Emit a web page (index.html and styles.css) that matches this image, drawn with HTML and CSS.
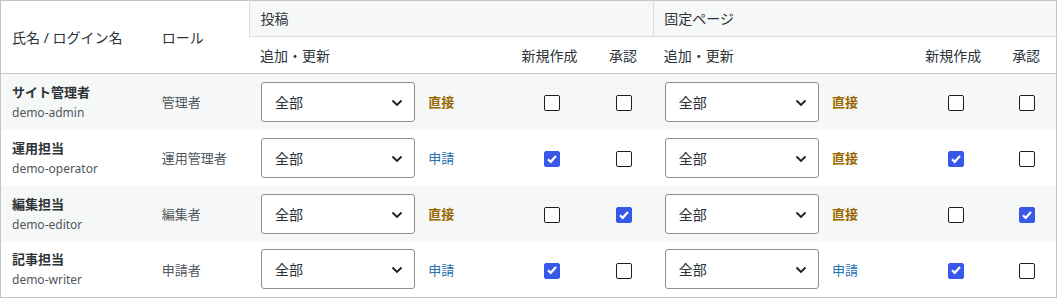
FILE: index.html
```html
<!DOCTYPE html>
<html lang="ja">
<head>
<meta charset="utf-8">
<link rel="stylesheet" href="styles.css">
</head>
<body>
<table class="perm">
  <colgroup>
    <col class="w-name"><col class="w-role">
    <col class="w-sel"><col class="w-mode"><col class="w-new"><col class="w-ok">
    <col class="w-sel"><col class="w-mode"><col class="w-new"><col class="w-ok2">
  </colgroup>
  <thead>
    <tr class="hr1">
      <th rowspan="2" class="h-left">氏名 / ログイン名</th>
      <th rowspan="2" class="h-left h-role">ロール</th>
      <th colspan="4" class="grp">投稿</th>
      <th colspan="4" class="grp">固定ページ</th>
    </tr>
    <tr class="hr2">
      <th class="sub">追加・更新</th>
      <th></th>
      <th class="subc subn">新規作成</th>
      <th class="subc">承認</th>
      <th class="sub">追加・更新</th>
      <th></th>
      <th class="subc subn">新規作成</th>
      <th class="subc">承認</th>
    </tr>
  </thead>
  <tbody>
    <tr class="alt">
      <td class="name"><div class="disp">サイト管理者</div><div class="login">demo-admin</div></td>
      <td class="role">管理者</td>
      <td class="selcell"><div class="sel"><span>全部</span><svg class="chev" width="12" height="8" viewBox="0 0 12 8"><path d="M1.5 1.5 6 6l4.5-4.5" fill="none" stroke="#1e1e1e" stroke-width="1.8"/></svg></div></td>
      <td class="mode"><span class="direct">直接</span></td>
      <td class="cbcell"><span class="cb"></span></td>
      <td class="cbcell"><span class="cb"></span></td>
      <td class="selcell"><div class="sel"><span>全部</span><svg class="chev" width="12" height="8" viewBox="0 0 12 8"><path d="M1.5 1.5 6 6l4.5-4.5" fill="none" stroke="#1e1e1e" stroke-width="1.8"/></svg></div></td>
      <td class="mode"><span class="direct">直接</span></td>
      <td class="cbcell"><span class="cb"></span></td>
      <td class="cbcell"><span class="cb"></span></td>
    </tr>
    <tr>
      <td class="name"><div class="disp">運用担当</div><div class="login">demo-operator</div></td>
      <td class="role">運用管理者</td>
      <td class="selcell"><div class="sel"><span>全部</span><svg class="chev" width="12" height="8" viewBox="0 0 12 8"><path d="M1.5 1.5 6 6l4.5-4.5" fill="none" stroke="#1e1e1e" stroke-width="1.8"/></svg></div></td>
      <td class="mode"><span class="request">申請</span></td>
      <td class="cbcell"><span class="cb on"><svg width="16" height="16" viewBox="0 0 16 16"><path d="M4 8.2 6.7 10.8 12 5" fill="none" stroke="#fff" stroke-width="2.2"/></svg></span></td>
      <td class="cbcell"><span class="cb"></span></td>
      <td class="selcell"><div class="sel"><span>全部</span><svg class="chev" width="12" height="8" viewBox="0 0 12 8"><path d="M1.5 1.5 6 6l4.5-4.5" fill="none" stroke="#1e1e1e" stroke-width="1.8"/></svg></div></td>
      <td class="mode"><span class="direct">直接</span></td>
      <td class="cbcell"><span class="cb on"><svg width="16" height="16" viewBox="0 0 16 16"><path d="M4 8.2 6.7 10.8 12 5" fill="none" stroke="#fff" stroke-width="2.2"/></svg></span></td>
      <td class="cbcell"><span class="cb"></span></td>
    </tr>
    <tr class="alt">
      <td class="name"><div class="disp">編集担当</div><div class="login">demo-editor</div></td>
      <td class="role">編集者</td>
      <td class="selcell"><div class="sel"><span>全部</span><svg class="chev" width="12" height="8" viewBox="0 0 12 8"><path d="M1.5 1.5 6 6l4.5-4.5" fill="none" stroke="#1e1e1e" stroke-width="1.8"/></svg></div></td>
      <td class="mode"><span class="direct">直接</span></td>
      <td class="cbcell"><span class="cb"></span></td>
      <td class="cbcell"><span class="cb on"><svg width="16" height="16" viewBox="0 0 16 16"><path d="M4 8.2 6.7 10.8 12 5" fill="none" stroke="#fff" stroke-width="2.2"/></svg></span></td>
      <td class="selcell"><div class="sel"><span>全部</span><svg class="chev" width="12" height="8" viewBox="0 0 12 8"><path d="M1.5 1.5 6 6l4.5-4.5" fill="none" stroke="#1e1e1e" stroke-width="1.8"/></svg></div></td>
      <td class="mode"><span class="direct">直接</span></td>
      <td class="cbcell"><span class="cb"></span></td>
      <td class="cbcell"><span class="cb on"><svg width="16" height="16" viewBox="0 0 16 16"><path d="M4 8.2 6.7 10.8 12 5" fill="none" stroke="#fff" stroke-width="2.2"/></svg></span></td>
    </tr>
    <tr>
      <td class="name"><div class="disp">記事担当</div><div class="login">demo-writer</div></td>
      <td class="role">申請者</td>
      <td class="selcell"><div class="sel"><span>全部</span><svg class="chev" width="12" height="8" viewBox="0 0 12 8"><path d="M1.5 1.5 6 6l4.5-4.5" fill="none" stroke="#1e1e1e" stroke-width="1.8"/></svg></div></td>
      <td class="mode"><span class="request">申請</span></td>
      <td class="cbcell"><span class="cb on"><svg width="16" height="16" viewBox="0 0 16 16"><path d="M4 8.2 6.7 10.8 12 5" fill="none" stroke="#fff" stroke-width="2.2"/></svg></span></td>
      <td class="cbcell"><span class="cb"></span></td>
      <td class="selcell"><div class="sel"><span>全部</span><svg class="chev" width="12" height="8" viewBox="0 0 12 8"><path d="M1.5 1.5 6 6l4.5-4.5" fill="none" stroke="#1e1e1e" stroke-width="1.8"/></svg></div></td>
      <td class="mode"><span class="request">申請</span></td>
      <td class="cbcell"><span class="cb on"><svg width="16" height="16" viewBox="0 0 16 16"><path d="M4 8.2 6.7 10.8 12 5" fill="none" stroke="#fff" stroke-width="2.2"/></svg></span></td>
      <td class="cbcell"><span class="cb"></span></td>
    </tr>
  </tbody>
</table>
</body>
</html>
```

FILE: styles.css
```css
* { box-sizing: border-box; }
html, body { margin: 0; padding: 0; background: #fff; }
body {
  font-family: "Noto Sans", "Noto Sans CJK JP", sans-serif;
  color: #1d2327;
}
.perm {
  width: 1057px;
  table-layout: fixed;
  border-collapse: collapse;
  border: 1px solid #c3c4c7;
}
.w-name { width: 149px; }
.w-role { width: 100px; }
.w-sel { width: 166px; }
.w-mode { width: 94px; }
.w-new { width: 82px; }
.w-ok { width: 61px; }
.w-ok2 { width: 60px; }

th, td { padding: 0; font-weight: 400; text-align: left; }
thead th { color: #2c3338; }

.hr1 th { height: 36px; }
.hr2 th { height: 37px; border-bottom: 1px solid #c3c4c7; }
.h-left {
  font-size: 14px;
  padding-left: 11px;
  vertical-align: middle;
  border-bottom: 1px solid #c3c4c7;
  background: #fff;
}
.h-role { padding-left: 12px; }
.grp {
  font-size: 14px;
  background: #f6f7f7;
  border-left: 1px solid #dcdcde;
  border-bottom: 1px solid #dcdcde;
  padding-left: 10px;
  padding-bottom: 1px;
}
.sub { font-size: 14px; padding-left: 10px; }
.subc { font-size: 14px; text-align: center; }
.subn { padding-right: 4px; }

tbody tr { height: 56px; }
tbody tr.alt { background: #f6f7f7; }
td { vertical-align: middle; }

.name { padding-left: 11px; }
.disp { font-size: 13px; font-weight: 700; color: #2c3338; line-height: 20px; }
.login { font-size: 12px; color: #50575e; line-height: 18px; margin-top: 2px; }
.role { font-size: 13px; color: #50575e; padding-left: 12px; }

.selcell { padding-left: 11px; }
.sel {
  position: relative;
  width: 154px;
  height: 40px;
  border: 1px solid #8c8f94;
  border-radius: 3px;
  background: #fff;
  display: flex;
  align-items: center;
  padding-left: 13px;
  font-size: 14px;
  color: #2c3338;
}
.chev { position: absolute; right: 11px; top: 16px; }

.mode { padding-left: 12px; font-size: 13px; }
.direct { color: #996800; font-weight: 700; }
.request { color: #2271b1; }

.cbcell { text-align: center; padding-left: 2px; }
.cb {
  display: inline-block;
  width: 16px;
  height: 16px;
  border: 1.5px solid #1e1e1e;
  border-radius: 2px;
  background: #fff;
  vertical-align: middle;
  position: relative;
}
.cb.on { background: #3858e9; border-color: #3858e9; }
.cb svg { position: absolute; left: -1.5px; top: -1.5px; }
```
